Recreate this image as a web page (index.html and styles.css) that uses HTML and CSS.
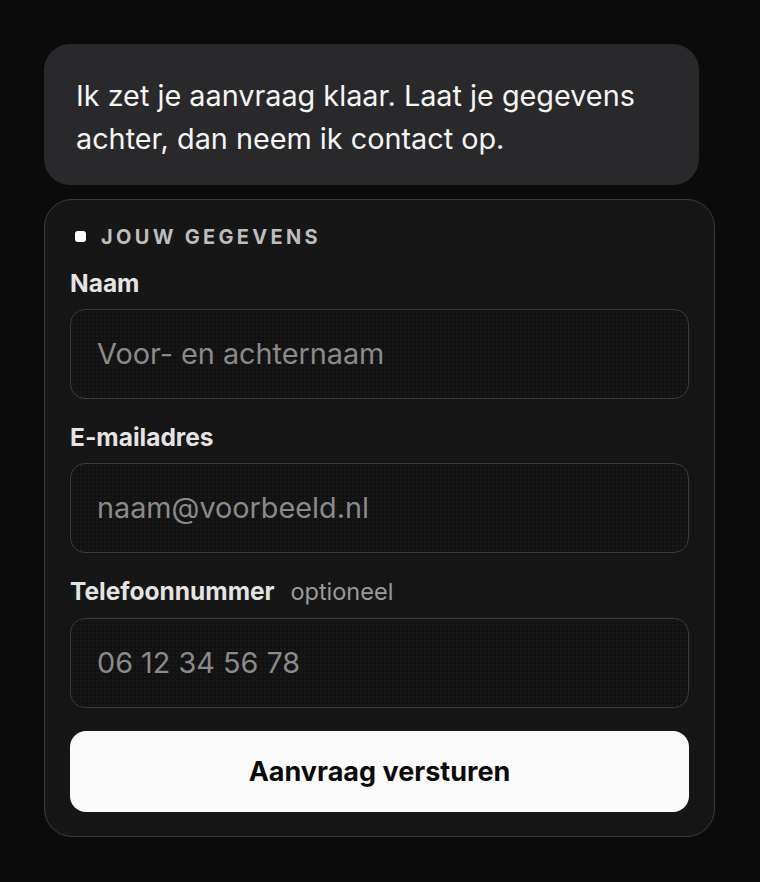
FILE: index.html
```html
<!DOCTYPE html>
<html lang="nl">
<head>
    <meta charset="UTF-8">
    <meta name="viewport" content="width=device-width, initial-scale=1.0">
    <title>Aanvraag</title>
    <link rel="stylesheet" href="styles.css">
</head>
<body>
    <div class="chat">
        <div class="bubble">Ik zet je aanvraag klaar. Laat je gegevens achter, dan neem ik contact op.</div>

        <form class="card">
            <div class="card-title">
                <span class="dot"></span>
                JOUW GEGEVENS
            </div>

            <div class="field">
                <label for="naam">Naam</label>
                <input id="naam" type="text" placeholder="Voor- en achternaam">
            </div>

            <div class="field">
                <label for="email">E-mailadres</label>
                <input id="email" type="email" placeholder="naam@voorbeeld.nl">
            </div>

            <div class="field">
                <label for="tel">Telefoonnummer <span class="hint">optioneel</span></label>
                <input id="tel" type="tel" placeholder="06 12 34 56 78">
            </div>

            <button type="button">Aanvraag versturen</button>
        </form>
    </div>
</body>
</html>
```

FILE: styles.css
```css
body {
    margin: 0;
    background-color: #0b0b0b;
    font-family: Inter, "Noto Sans", sans-serif;
    color: #fff;
}

.chat {
    padding: 44px 45px 0 44px;
    display: flex;
    flex-direction: column;
    gap: 14px;
}

.bubble {
    width: 655px;
    box-sizing: border-box;
    background-color: #29292b;
    border-radius: 26px;
    padding: 30px 32px 25px 32px;
    font-size: 28.8px;
    line-height: 43px;
    color: #f5f5f5;
}

.card {
    background-color: #161616;
    border: 1.5px solid #3c3c3c;
    border-radius: 28px;
    padding: 24.5px 25px 24px 25px;
    display: flex;
    flex-direction: column;
}

.card-title {
    display: flex;
    align-items: center;
    gap: 15px;
    padding-left: 5px;
    font-size: 20px;
    font-weight: 700;
    letter-spacing: 3.3px;
    color: #bdbdbd;
    line-height: 24px;
    margin-bottom: 20px;
}

.dot {
    width: 11px;
    height: 11px;
    border-radius: 3px;
    background-color: #fff;
}

.field {
    display: flex;
    flex-direction: column;
    gap: 12px;
    margin-bottom: 24px;
}

.field:last-of-type {
    margin-bottom: 23px;
}

.field label {
    font-size: 24.5px;
    font-weight: 700;
    line-height: 28px;
    color: #e4e4e4;
}

.field .hint {
    font-size: 23.5px;
    font-weight: 400;
    color: #9a9a9a;
    margin-left: 10px;
}

.field input {
    height: 90px;
    box-sizing: border-box;
    background-color: #121212;
    background-image: radial-gradient(rgba(255, 255, 255, 0.035) 0.7px, transparent 0.8px);
    background-size: 4px 4px;
    border: 1.5px solid #3c3c3c;
    border-radius: 15px;
    padding: 0 26px;
    font-family: inherit;
    font-size: 28.8px;
    color: #fff;
    outline: none;
}

.field input::placeholder {
    color: #8a8a8a;
}

button {
    height: 81px;
    background-color: #fafafa;
    color: #0b0b0b;
    border: none;
    border-radius: 16px;
    font-family: inherit;
    font-size: 27px;
    font-weight: 700;
    cursor: pointer;
}
```
